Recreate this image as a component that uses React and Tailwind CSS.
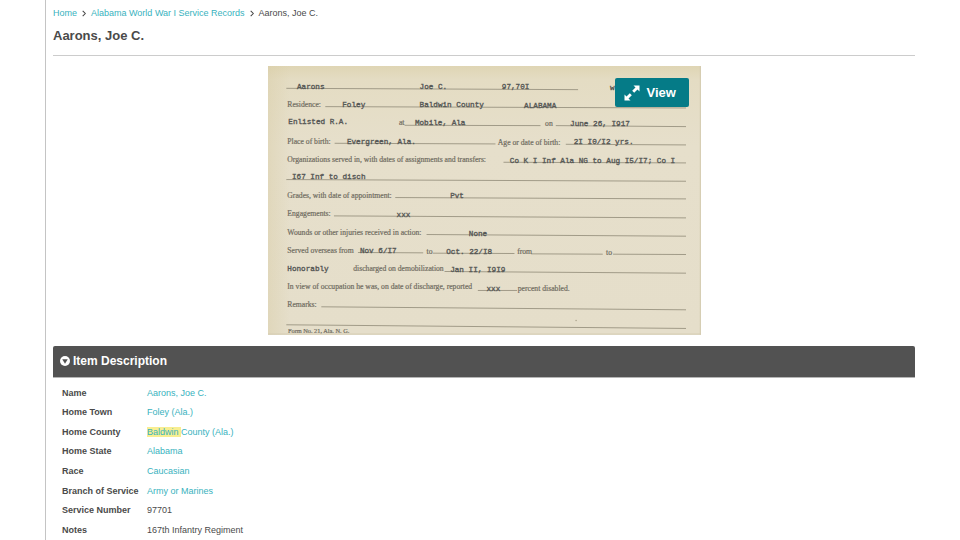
import React from "react";

// Printed form captions: [x, baseline, text]
const printed = [
  [58, 124, "Residence:"],
  [393, 178, "at"],
  [832, 180, "on"],
  [58, 233, "Place of birth:"],
  [690, 236, "Age or date of birth:"],
  [58, 288, "Organizations served in, with dates of assignments and transfers:"],
  [58, 396, "Grades, with date of appointment:"],
  [58, 451, "Engagements:"],
  [58, 507, "Wounds or other injuries received in action:"],
  [58, 561, "Served overseas from"],
  [476, 563, "to"],
  [748, 565, "from"],
  [1015, 567, "to"],
  [256, 617, "discharged on demobilization"],
  [58, 671, "In view of occupation he was, on date of discharge, reported"],
  [750, 675, "percent disabled."],
  [58, 724, "Remarks:"],
];

// Typewritten entries: [x, baseline, text]
const typed = [
  [87, 68, "Aarons"],
  [455, 68, "Joe C."],
  [702, 69, "97,70I"],
  [1027, 72, "w"],
  [223, 122, "Foley"],
  [455, 123, "Baldwin County"],
  [769, 125, "ALABAMA"],
  [61, 175, "Enlisted R.A."],
  [441, 178, "Mobile, Ala"],
  [907, 180, "June 26, I917"],
  [237, 233, "Evergreen, Ala."],
  [918, 235, "2I  I0/I2 yrs."],
  [726, 290, "Co K I Inf Ala NG to Aug I5/I7; Co I"],
  [72, 338, "I67 Inf to disch"],
  [547, 395, "Pvt"],
  [386, 452, "xxx"],
  [603, 509, "None"],
  [276, 561, "Nov 6/I7"],
  [535, 563, "Oct. 22/I8"],
  [58, 616, "Honorably"],
  [547, 619, "Jan II, I9I9"],
  [656, 675, "xxx"],
];

// Ruled blanks: [x1, y1, x2, y2]
const rules = [
  [55, 67, 931, 71],
  [172, 122, 1255, 126],
  [410, 178, 818, 179],
  [864, 179, 1255, 182],
  [200, 232, 683, 234],
  [894, 235, 1255, 237],
  [707, 289, 1255, 291],
  [55, 341, 1255, 346],
  [382, 395, 1255, 399],
  [198, 450, 1255, 456],
  [476, 506, 1255, 511],
  [270, 560, 466, 561],
  [495, 562, 740, 563],
  [790, 564, 1005, 565],
  [1036, 565, 1255, 566],
  [530, 617, 1255, 622],
  [630, 674, 748, 674],
  [160, 723, 1255, 732],
  [55, 777, 1255, 788],
];

const records = [
  { label: "Name", value: "Aarons, Joe C.", link: true },
  { label: "Home Town", value: "Foley (Ala.)", link: true },
  { label: "Home County", mark: "Baldwin ", value: "County (Ala.)", link: true },
  { label: "Home State", value: "Alabama", link: true },
  { label: "Race", value: "Caucasian", link: true },
  { label: "Branch of Service", value: "Army or Marines", link: true },
  { label: "Service Number", value: "97701" },
  { label: "Notes", value: "167th Infantry Regiment" },
];

function ServiceCard() {
  return (
    <svg viewBox="0 0 1300 807" className="block w-full" role="img" aria-label="Service record card">
      <defs>
        <linearGradient id="paper" x1="0" y1="0" x2="0" y2="1">
          <stop offset="0" stopColor="#dfd5b4" />
          <stop offset="0.05" stopColor="#e4dcc3" />
          <stop offset="0.3" stopColor="#e6dfcb" />
          <stop offset="1" stopColor="#e5deca" />
        </linearGradient>
        <linearGradient id="edge" x1="0" y1="0" x2="1" y2="0">
          <stop offset="0" stopColor="#d8cca4" stopOpacity="0.4" />
          <stop offset="0.05" stopColor="#d8cca4" stopOpacity="0" />
        </linearGradient>
      </defs>
      <rect width="1300" height="807" fill="url(#paper)" />
      <rect width="1300" height="807" fill="url(#edge)" />
      <path d="M0 805H1300M1298 0V807" stroke="#d3cab0" strokeWidth="3" />
      <g stroke="#a19b88" strokeWidth="3">
        {rules.map(([x1, y1, x2, y2]) => (
          <line key={`${x1}-${y1}`} x1={x1} y1={y1} x2={x2} y2={y2} />
        ))}
      </g>
      <g fontFamily="'Liberation Serif', serif" fontSize="23" fill="#706c61" stroke="#706c61" strokeWidth="0.6">
        {printed.map(([x, y, text]) => (
          <text key={`${x}-${y}`} x={x} y={y}>{text}</text>
        ))}
        <text x="60" y="803" fontSize="19">Form No. 21, Ala. N. G.</text>
      </g>
      <g
        fontFamily="'Liberation Mono', monospace"
        fontSize="23"
        fill="#555755"
        stroke="#555755"
        strokeWidth="1"
        className="whitespace-pre"
      >
        {typed.map(([x, y, text]) => (
          <text key={`${x}-${y}`} x={x} y={y}>{text}</text>
        ))}
      </g>
      <circle cx="925" cy="764" r="2" fill="#a39b83" />
    </svg>
  );
}

function ExpandIcon() {
  return (
    <svg viewBox="0 0 16 16" className="size-4" fill="currentColor" aria-hidden="true">
      <path d="M9.500 0.500h6v6l-2-2-3.300 3.300-2-2 3.300-3.300z" />
      <path d="M6.500 15.500h-6v-6l2 2 3.300-3.300 2 2-3.300 3.300z" />
    </svg>
  );
}

function Separator() {
  return (
    <svg viewBox="0 0 4 8" className="h-[7px] w-1" fill="none" stroke="#444" strokeWidth="1.200" aria-hidden="true">
      <path d="M0.500 1l3 3-3 3" />
    </svg>
  );
}

export default function App() {
  return (
    <div className="h-screen overflow-hidden bg-white font-['Liberation_Sans',Arial,sans-serif] text-[#4a4a4a]">
      <main className="ml-[45px] min-h-full border-l border-[#c4c4c4] pr-[45px] pl-[7px]">
        <nav aria-label="Breadcrumb" className="flex items-center gap-[5px] pt-[7px] text-[9px] leading-3">
          <a href="#home" className="text-[#38b2be]">Home</a>
          <Separator />
          <a href="#collection" className="text-[#38b2be]">Alabama World War I Service Records</a>
          <Separator />
          <span>Aarons, Joe C.</span>
        </nav>
        <h1 className="mt-[9px] border-b border-[#cccccc] pb-[11px] text-[13px] leading-4 font-bold">Aarons, Joe C.</h1>

        <figure className="relative mx-auto mt-[10px] w-[433px]">
          <ServiceCard />
          <button
            type="button"
            className="absolute top-3 right-3 flex h-[29px] w-[74px] items-center gap-[7px] rounded-[2px] bg-[#057b87] pl-[9px] text-[13px] font-bold text-white"
          >
            <ExpandIcon />
            View
          </button>
        </figure>

        <section className="mt-[11px]">
          <h2 className="rounded-t-[2px] border-b border-[#b5b5b5] bg-[#525252] text-[12px] font-bold text-white">
            <button type="button" aria-expanded="true" className="flex h-[31px] w-full items-center gap-[3px] pl-[7px]">
              <svg viewBox="0 0 20 20" className="size-[10px]" aria-hidden="true">
                <circle cx="10" cy="10" r="10" fill="white" />
                <path d="M4.500 6.500h11L10 15.500z" fill="#525252" />
              </svg>
              Item Description
            </button>
          </h2>
          <table className="mt-[5px] ml-[9px] h-[157px] text-[9px] leading-3">
            <tbody>
              {records.map(({ label, mark, value, link }) => (
                <tr key={label}>
                  <th scope="row" className="w-[85px] p-0 text-left font-bold whitespace-nowrap">{label}</th>
                  <td className="p-0">
                    {link ? (
                      <a href="#search" className="text-[#38b2be]">
                        {mark && <mark className="bg-[#f8ee91] text-inherit">{mark}</mark>}
                        {value}
                      </a>
                    ) : (
                      value
                    )}
                  </td>
                </tr>
              ))}
            </tbody>
          </table>
        </section>
      </main>
    </div>
  );
}
